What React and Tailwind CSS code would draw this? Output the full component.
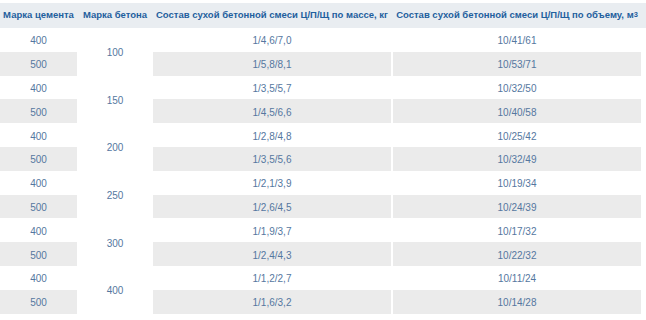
import React from 'react';

const groups = [
  { beton: '100', rows: [['400', '1/4,6/7,0', '10/41/61'], ['500', '1/5,8/8,1', '10/53/71']] },
  { beton: '150', rows: [['400', '1/3,5/5,7', '10/32/50'], ['500', '1/4,5/6,6', '10/40/58']] },
  { beton: '200', rows: [['400', '1/2,8/4,8', '10/25/42'], ['500', '1/3,5/5,6', '10/32/49']] },
  { beton: '250', rows: [['400', '1/2,1/3,9', '10/19/34'], ['500', '1/2,6/4,5', '10/24/39']] },
  { beton: '300', rows: [['400', '1/1,9/3,7', '10/17/32'], ['500', '1/2,4/4,3', '10/22/32']] },
  { beton: '400', rows: [['400', '1/1,2/2,7', '10/11/24'], ['500', '1/1,6/3,2', '10/14/28']] },
];

const cols = 'grid grid-cols-[77px_72px_238px_248px] gap-x-[2px]';

const App = () => {
  return (
    <div className="w-[646px] h-[320px] bg-white overflow-hidden pt-[3px]" style={{ fontFamily: '"Liberation Sans", Arial, sans-serif' }}>
      {/* Header */}
      <div className={`${cols} h-[25px] bg-[#e9edf1] items-center text-[9.5px] font-bold text-[#1f5f9e] whitespace-nowrap`}>
        <div className="text-center">Марка цемента</div>
        <div className="text-center">Марка бетона</div>
        <div className="text-center">Состав сухой бетонной смеси Ц/П/Щ по массе, кг</div>
        <div className="text-center">
          Состав сухой бетонной смеси Ц/П/Щ по объему, м<sup className="text-[7.5px] relative -top-[1px]">3</sup>
        </div>
      </div>

      {/* Body */}
      <div className={`${cols} auto-rows-[23.8px] text-[10px] text-[#5577a0]`}>
        {groups.map((g) =>
          g.rows.map((r, i) => {
            const bg = i === 1 ? 'bg-[#ebebeb]' : 'bg-white';
            return (
              <React.Fragment key={g.beton + r[0]}>
                <div className={`${bg} flex items-center justify-center pt-[2px]`}>{r[0]}</div>
                {i === 0 && (
                  <div className="row-span-2 bg-white flex items-center justify-center pt-[2px]">{g.beton}</div>
                )}
                <div className={`${bg} flex items-center justify-center pt-[2px]`}>{r[1]}</div>
                <div className={`${bg} flex items-center justify-center pt-[2px]`}>{r[2]}</div>
              </React.Fragment>
            );
          })
        )}
      </div>
    </div>
  );
};

export default App;
